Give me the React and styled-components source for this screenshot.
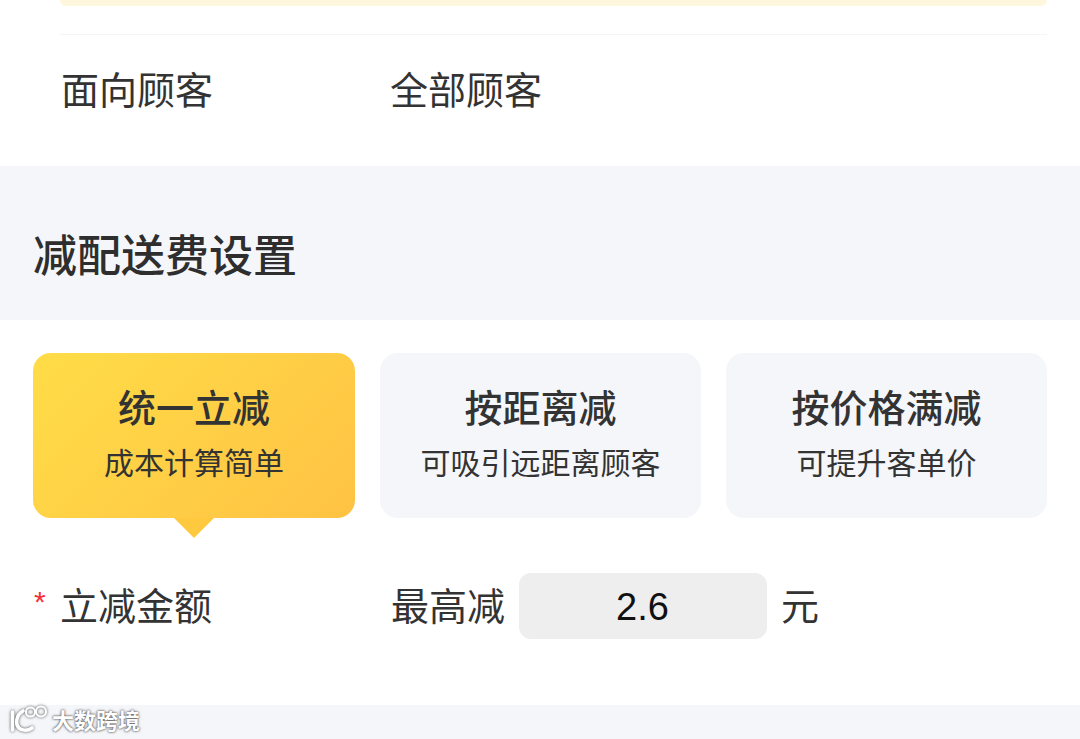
import React from 'react';
import styled, { createGlobalStyle } from 'styled-components';

const GlobalStyle = createGlobalStyle`
  html, body {
    margin: 0;
    padding: 0;
    background: #fff;
    overflow: hidden;
  }
  * { box-sizing: border-box; }
`;

const Page = styled.div`
  position: relative;
  width: 1080px;
  height: 739px;
  overflow: hidden;
  background: #fff;
  color: #333;
  font-family: "Noto Sans CJK SC", "Liberation Sans", sans-serif;
`;

const TopSection = styled.div`
  padding: 0 33px 0 60px;
`;

const Notice = styled.div`
  height: 6px;
  background: #fff6de;
  border-radius: 0 0 10px 10px;
`;

const AudienceRow = styled.div`
  display: flex;
  align-items: center;
  height: 132px;
  margin-top: 28px;
  padding-bottom: 26px;
  border-top: 1px solid #f5f5f6;
`;

const Label = styled.div`
  width: ${(p) => p.$width || 330}px;
  padding-left: ${(p) => p.$indent || 0}px;
  font-size: 38px;
  line-height: 52px;
  flex-shrink: 0;
`;

const Value = styled.div`
  font-size: 38px;
  line-height: 52px;
`;

const SectionHead = styled.div`
  display: flex;
  align-items: center;
  height: 154px;
  padding: 20px 0 0 33px;
  background: #f5f6fa;
  color: #2e2e2e;
  font-size: 44px;
  font-weight: 500;
  line-height: 60px;
`;

const Cards = styled.div`
  display: grid;
  grid-template-columns: 322px 321px 321px;
  gap: 0 25px;
  padding: 33px 33px 0;
`;

const Card = styled.div`
  position: relative;
  display: flex;
  flex-direction: column;
  align-items: center;
  height: 165px;
  padding-top: 26px;
  border-radius: 18px;
  background: ${(p) => (p.$active ? 'linear-gradient(135deg, #ffdd47 0%, #ffc244 100%)' : '#f5f6fa')};

  ${(p) => p.$active && `
    &::after {
      content: "";
      position: absolute;
      left: 50%;
      bottom: -20px;
      margin-left: -20px;
      border-style: solid;
      border-width: 20px 20px 0;
      border-color: #ffc93f transparent transparent;
    }
  `}
`;

const CardTitle = styled.div`
  font-size: 38px;
  font-weight: 500;
  line-height: 54px;
`;

const CardSub = styled.div`
  margin-top: 6px;
  font-size: 30px;
  line-height: 44px;
`;

const AmountRow = styled.div`
  display: flex;
  align-items: center;
  height: 66px;
  margin-top: 55px;
  padding-left: 34px;
`;

const Star = styled.span`
  width: 26px;
  margin-top: -8px;
  flex-shrink: 0;
  color: #f5303b;
  font-size: 30px;
  font-family: "Liberation Sans", sans-serif;
  line-height: 30px;
`;

const AmountLabel = styled(Label)`
  margin-top: -4px;
`;

const Amount = styled.div`
  width: 248px;
  height: 66px;
  margin: 0 14px 0 14px;
  padding-right: 1px;
  border-radius: 12px;
  background: #eeeeee;
  color: #111;
  text-align: center;
  font-family: "Liberation Sans", sans-serif;
  font-size: 38px;
  line-height: 68px;
`;

const AmountValue = styled(Value)`
  margin-top: -4px;
`;

const BottomBand = styled.div`
  height: 34px;
  margin-top: 66px;
  background: #f5f6fa;
`;

const Watermark = styled.div`
  position: absolute;
  left: 9px;
  bottom: 6px;
  display: flex;
  align-items: center;
  color: #fff;
  font-size: 22px;
  line-height: 28px;
  font-weight: 700;
  text-shadow: 0 0 2px rgba(60, 60, 60, 0.9), 0 0 3px rgba(60, 60, 60, 0.6);
`;

const WatermarkLogo = styled.svg`
  display: block;
  width: 43px;
  height: 28px;
  filter: drop-shadow(0 0 1.5px rgba(60, 60, 60, 0.9));
`;

const cards = [
  { title: '统一立减', sub: '成本计算简单', active: true },
  { title: '按距离减', sub: '可吸引远距离顾客' },
  { title: '按价格满减', sub: '可提升客单价' },
];

export default function App() {
  return (
    <Page>
      <GlobalStyle />
      <TopSection>
        <Notice />
        <AudienceRow>
          <Label $indent={1}>面向顾客</Label>
          <Value>全部顾客</Value>
        </AudienceRow>
      </TopSection>
      <SectionHead>减配送费设置</SectionHead>
      <Cards>
        {cards.map((c) => (
          <Card key={c.title} $active={c.active}>
            <CardTitle>{c.title}</CardTitle>
            <CardSub>{c.sub}</CardSub>
          </Card>
        ))}
      </Cards>
      <AmountRow>
        <Star>*</Star>
        <AmountLabel $width={331}>立减金额</AmountLabel>
        <AmountValue>最高减</AmountValue>
        <Amount>2.6</Amount>
        <AmountValue>元</AmountValue>
      </AmountRow>
      <BottomBand />
      <Watermark>
        <WatermarkLogo viewBox="0 0 43 28" fill="none" stroke="#fff" strokeLinecap="round">
          <path d="M3.5 7v18" strokeWidth="3.6" />
          <path d="M14 6C7 10 6 19 10 23c3 3 9 3 13 0" strokeWidth="3.6" />
          <circle cx="21.5" cy="7" r="4.6" strokeWidth="2" />
          <circle cx="32" cy="6.5" r="5" strokeWidth="2" />
        </WatermarkLogo>
        <span>大数跨境</span>
      </Watermark>
    </Page>
  );
}
